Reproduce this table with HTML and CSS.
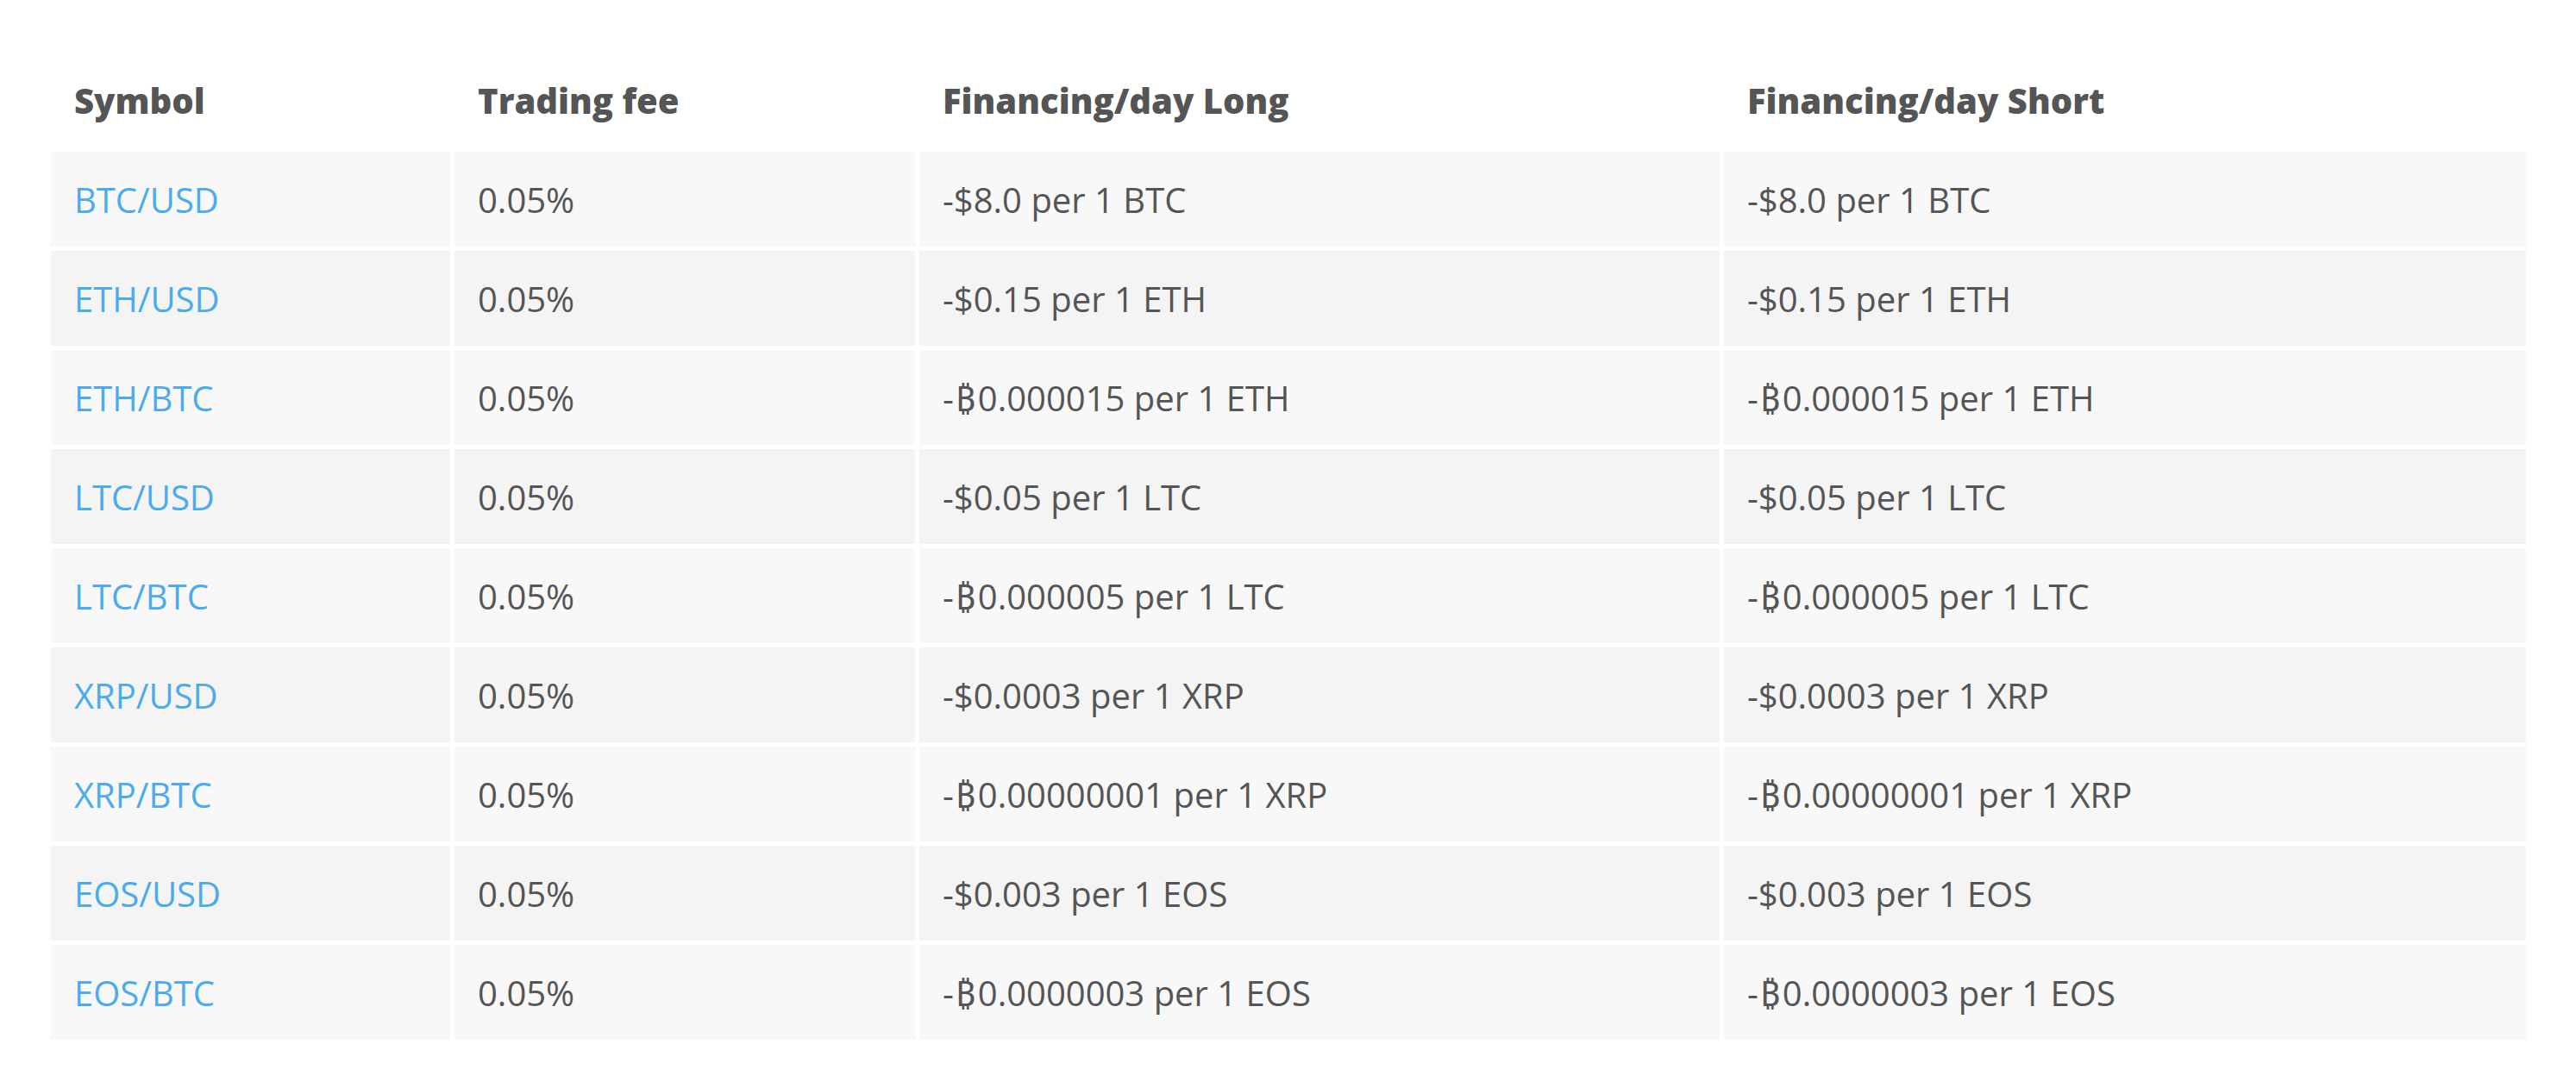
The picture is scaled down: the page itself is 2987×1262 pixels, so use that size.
FILE: index.html
```html
<!DOCTYPE html>
<html lang="en">
<head>
<meta charset="utf-8">
<title>Fees</title>
<link rel="stylesheet" href="styles.css">
</head>
<body>
<div class="wrap">
<table class="fees">
<colgroup>
<col class="c1"><col class="c2"><col class="c3"><col class="c4">
</colgroup>
<thead>
<tr><th>Symbol</th><th>Trading fee</th><th>Financing/day Long</th><th>Financing/day Short</th></tr>
</thead>
<tbody>
<tr><td><a href="#">BTC/USD</a></td><td>0.05%</td><td>-$8.0 per 1 BTC</td><td>-$8.0 per 1 BTC</td></tr>
<tr><td><a href="#">ETH/USD</a></td><td>0.05%</td><td>-$0.15 per 1 ETH</td><td>-$0.15 per 1 ETH</td></tr>
<tr><td><a href="#">ETH/BTC</a></td><td>0.05%</td><td>-<span class="btc">₿</span>0.000015 per 1 ETH</td><td>-<span class="btc">₿</span>0.000015 per 1 ETH</td></tr>
<tr><td><a href="#">LTC/USD</a></td><td>0.05%</td><td>-$0.05 per 1 LTC</td><td>-$0.05 per 1 LTC</td></tr>
<tr><td><a href="#">LTC/BTC</a></td><td>0.05%</td><td>-<span class="btc">₿</span>0.000005 per 1 LTC</td><td>-<span class="btc">₿</span>0.000005 per 1 LTC</td></tr>
<tr><td><a href="#">XRP/USD</a></td><td>0.05%</td><td>-$0.0003 per 1 XRP</td><td>-$0.0003 per 1 XRP</td></tr>
<tr><td><a href="#">XRP/BTC</a></td><td>0.05%</td><td>-<span class="btc">₿</span>0.00000001 per 1 XRP</td><td>-<span class="btc">₿</span>0.00000001 per 1 XRP</td></tr>
<tr><td><a href="#">EOS/USD</a></td><td>0.05%</td><td>-$0.003 per 1 EOS</td><td>-$0.003 per 1 EOS</td></tr>
<tr><td><a href="#">EOS/BTC</a></td><td>0.05%</td><td>-<span class="btc">₿</span>0.0000003 per 1 EOS</td><td>-<span class="btc">₿</span>0.0000003 per 1 EOS</td></tr>
</tbody>
</table>
</div>
</body>
</html>
```
FILE: styles.css
```css
html, body {
  margin: 0;
  padding: 0;
  background: #ffffff;
}
body {
  font-family: "Open Sans", "Noto Sans", "DejaVu Sans", sans-serif;
  color: #555555;
}
.wrap {
  padding: 56px 53px 0 54px;
}
.fees {
  width: 2880px;
  border-collapse: separate;
  border-spacing: 5px;
  table-layout: fixed;
  font-size: 40px;
}
.c1 { width: 463px; }
.c2 { width: 534px; }
.c3 { width: 928px; }
.c4 { width: 930px; }
.fees th,
.fees td {
  height: 110px;
  padding: 0 27px;
  text-align: left;
  vertical-align: middle;
  white-space: nowrap;
  box-sizing: border-box;
}
.fees th {
  font-weight: 800;
  color: #555555;
  background: #ffffff;
}
.fees td {
  font-weight: 400;
}
.fees tbody tr:nth-child(odd) td { background: #f8f8f8; }
.fees tbody tr:nth-child(even) td { background: #f4f4f4; }
.fees a {
  color: #4cabec;
  text-decoration: none;
}
.btc {
  margin: 0 3px 0 2px;
}
```
